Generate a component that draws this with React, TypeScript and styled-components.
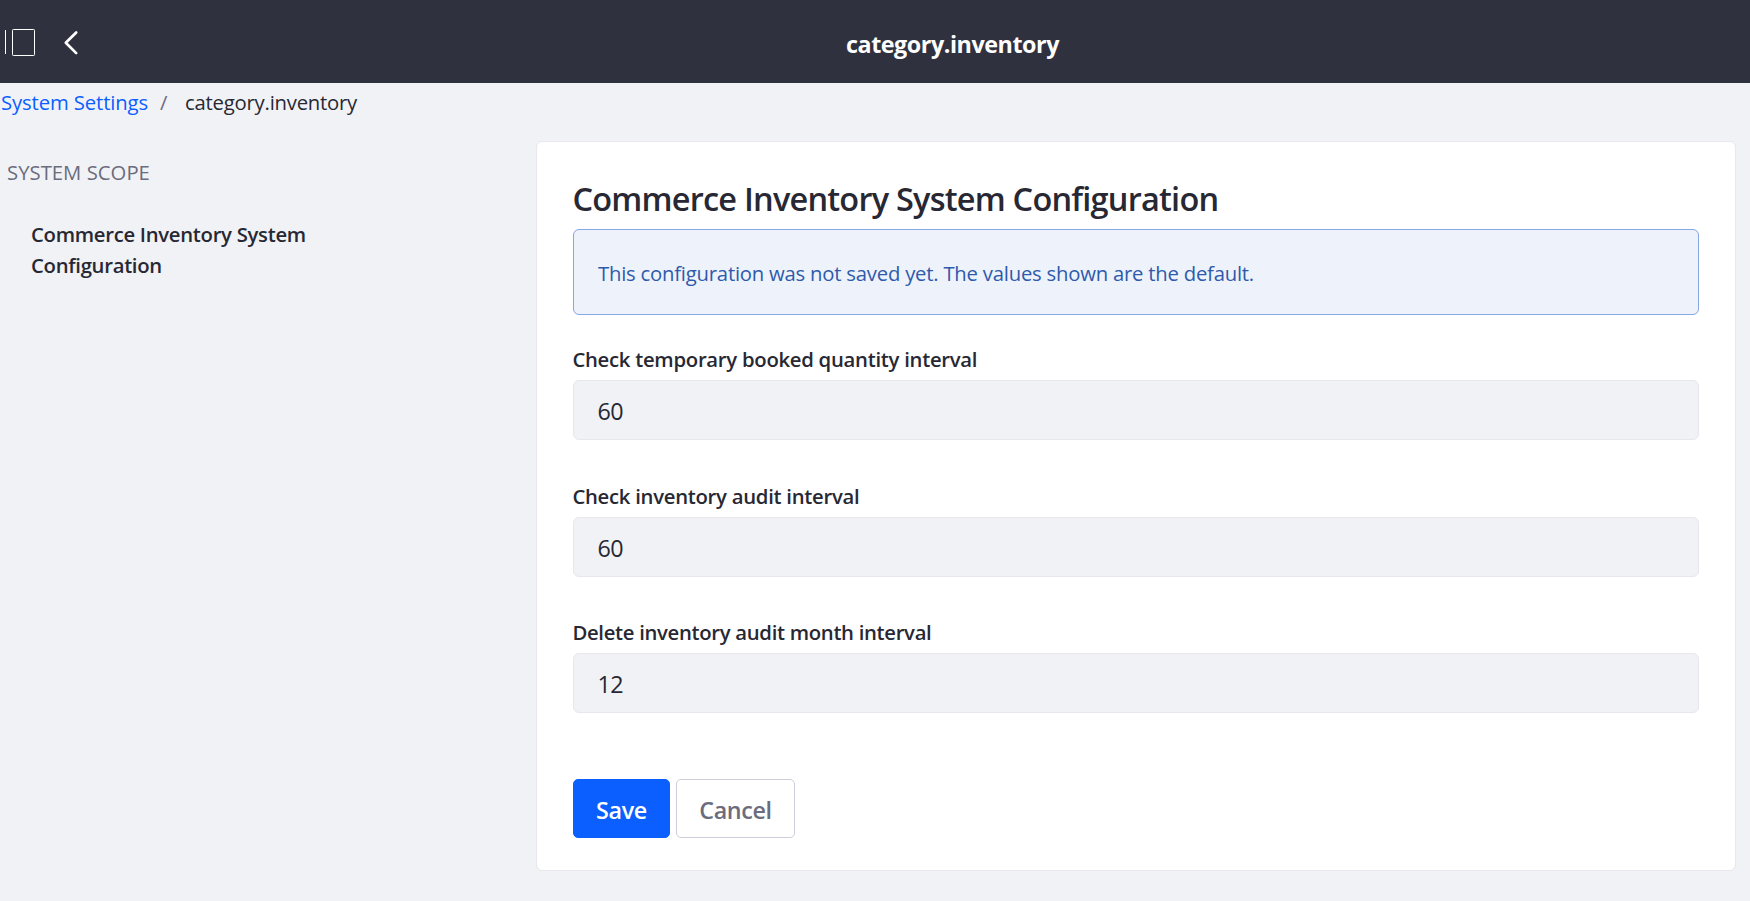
import React from 'react';
import styled, { createGlobalStyle } from 'styled-components';

const GlobalStyle = createGlobalStyle`
  *, *::before, *::after { box-sizing: border-box; }
  body {
    margin: 0;
    background: #f1f2f5;
    color: #272833;
    font-family: 'Open Sans', sans-serif;
    font-size: 20.3px;
  }
`;

const Page = styled.div`
  display: flex;
  flex-direction: column;
  min-height: 100vh;
`;

const ControlMenu = styled.header`
  display: flex;
  align-items: center;
  height: 83px;
  background: #30313f;
  color: #fff;
`;

const MenuIcons = styled.div`
  display: flex;
  align-items: center;
  width: 155px;
  height: 100%;
`;

const IconButton = styled.button<{ $offset: number }>`
  display: flex;
  margin: 0 0 0 ${(p) => p.$offset}px;
  padding: 0;
  border: 0;
  background: none;
  color: inherit;
`;

const MenuTitle = styled.h1`
  flex: 1;
  margin: 0;
  padding-top: 5px;
  text-align: center;
  font-size: 23.3px;
  font-weight: 700;
  letter-spacing: -0.45px;
  line-height: 32px;
`;

const Breadcrumb = styled.nav`
  display: flex;
  height: 58px;
  padding: 3px 0 0 1px;
  line-height: 32px;
`;

const CrumbLink = styled.a`
  color: #0b5fff;
  letter-spacing: -0.12px;
  text-decoration: none;
`;

const CrumbDivider = styled.span`
  width: 37px;
  padding-left: 12px;
  color: #6b6c7e;
`;

const CrumbCurrent = styled.span`
  letter-spacing: -0.22px;
`;

const Content = styled.main`
  display: grid;
  grid-template-columns: 536px 1fr;
  align-items: start;
  padding-right: 14px;
`;

const Sidebar = styled.aside`
  padding: 15px 0 0 7px;
`;

const ScopeTitle = styled.div`
  color: #6b6c7e;
  letter-spacing: 0.02px;
  line-height: 32px;
  text-transform: uppercase;
`;

const ScopeLink = styled.a`
  display: block;
  width: 300px;
  margin: 31px 0 0 24px;
  font-weight: 600;
  letter-spacing: -0.29px;
  line-height: 31px;
`;

const Card = styled.form`
  padding: 37px 36px 32px;
  border: 1px solid #e7e7ed;
  border-radius: 6px;
  background: #fff;
`;

const CardTitle = styled.h2`
  margin: 0 0 10px -0.6px;
  font-size: 32.5px;
  font-weight: 560;
  letter-spacing: -0.78px;
  line-height: 40px;
`;

const Alert = styled.div`
  display: flex;
  align-items: center;
  height: 86px;
  margin-bottom: 28px;
  padding: 2px 24px 0;
  border: 1px solid #89a7e0;
  border-radius: 6px;
  background: #eef2fa;
  color: #2e5aac;
  letter-spacing: -0.22px;
`;

const Fields = styled.div`
  display: flex;
  flex-direction: column;
  gap: 39.5px;
`;

const Label = styled.label<{ $spacing: number }>`
  display: block;
  margin-left: -0.6px;
  font-weight: 600;
  letter-spacing: ${(p) => p.$spacing}px;
  line-height: 32px;
`;

const Input = styled.input`
  display: block;
  width: 100%;
  height: 60px;
  margin-top: 5px;
  padding: 2px 23.4px 0;
  border: 1px solid #e7e7ed;
  border-radius: 6px;
  background: #f1f2f5;
  color: #272833;
  font: inherit;
  font-size: 23.3px;
  letter-spacing: -0.4px;
`;

const Actions = styled.div`
  display: flex;
  gap: 6px;
  margin-top: 66px;
`;

const Button = styled.button<{ $primary?: boolean }>`
  width: ${(p) => (p.$primary ? 97 : 119)}px;
  height: 59px;
  padding: 2px 0 0;
  border: 1px solid ${(p) => (p.$primary ? '#0b5fff' : '#cdced9')};
  border-radius: 5px;
  background: ${(p) => (p.$primary ? '#0b5fff' : '#fff')};
  color: ${(p) => (p.$primary ? '#fff' : '#6b6c7e')};
  font: inherit;
  font-size: 23.3px;
  font-weight: 600;
  letter-spacing: -0.35px;
`;

const fields = [
  { id: 'booked', label: 'Check temporary booked quantity interval', value: '60', spacing: -0.27 },
  { id: 'audit', label: 'Check inventory audit interval', value: '60', spacing: -0.27 },
  { id: 'months', label: 'Delete inventory audit month interval', value: '12', spacing: -0.305 },
];

export default function App() {
  return (
    <Page>
      <GlobalStyle />
      <ControlMenu>
        <MenuIcons>
          <IconButton type="button" $offset={4} aria-label="Toggle product menu">
            <svg width="33" height="29" viewBox="0 0 33 29" fill="none" stroke="currentColor">
              <path d="M1.5 3v24" />
              <rect x="8.5" y="2.5" width="22" height="26" rx="0.8" />
            </svg>
          </IconButton>
          <IconButton type="button" $offset={25} aria-label="Back">
            <svg width="18" height="29" viewBox="0 0 18 29" fill="none" stroke="currentColor" strokeWidth="2.7" strokeLinecap="round" strokeLinejoin="round">
              <path d="M14.2 5.5L3.8 15.8L14.2 26.1" />
            </svg>
          </IconButton>
        </MenuIcons>
        <MenuTitle>category.inventory</MenuTitle>
      </ControlMenu>
      <Breadcrumb>
        <CrumbLink>System Settings</CrumbLink>
        <CrumbDivider>/</CrumbDivider>
        <CrumbCurrent>category.inventory</CrumbCurrent>
      </Breadcrumb>
      <Content>
        <Sidebar>
          <ScopeTitle>System Scope</ScopeTitle>
          <ScopeLink>Commerce Inventory System Configuration</ScopeLink>
        </Sidebar>
        <Card>
          <CardTitle>Commerce Inventory System Configuration</CardTitle>
          <Alert>This configuration was not saved yet. The values shown are the default.</Alert>
          <Fields>
            {fields.map((f) => (
              <div key={f.id}>
                <Label htmlFor={f.id} $spacing={f.spacing}>{f.label}</Label>
                <Input id={f.id} defaultValue={f.value} />
              </div>
            ))}
          </Fields>
          <Actions>
            <Button type="button" $primary>Save</Button>
            <Button type="button">Cancel</Button>
          </Actions>
        </Card>
      </Content>
    </Page>
  );
}
